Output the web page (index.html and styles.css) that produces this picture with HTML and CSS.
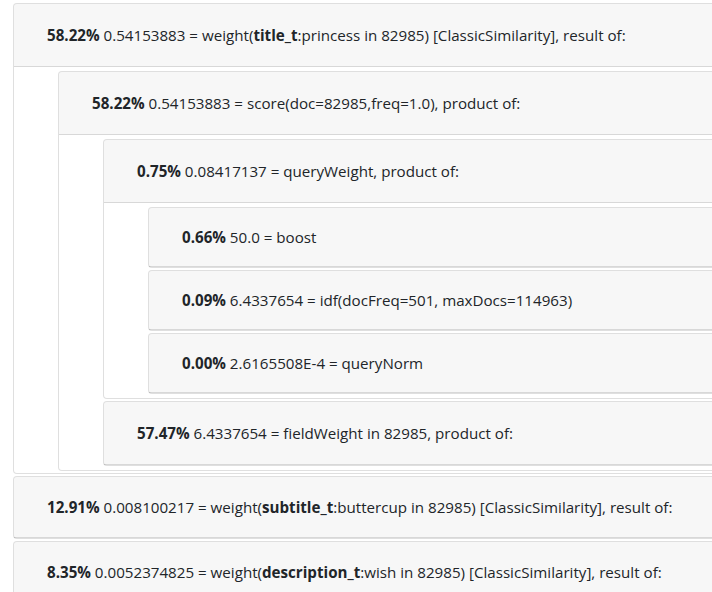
FILE: index.html
```html
<!DOCTYPE html>
<html>
<head>
<meta charset="utf-8">
<link rel="stylesheet" href="styles.css">
</head>
<body>
<div class="tree">
  <div class="card">
    <div class="card-header"><b>58.22%</b> 0.54153883 = weight(<b>title_t</b>:princess in 82985) [ClassicSimilarity], result of:</div>
    <div class="card-body">
      <div class="card">
        <div class="card-header"><b>58.22%</b> 0.54153883 = score(doc=82985,freq=1.0), product of:</div>
        <div class="card-body">
          <div class="card">
            <div class="card-header"><b>0.75%</b> 0.08417137 = queryWeight, product of:</div>
            <div class="card-body">
              <div class="card leaf">
                <div class="card-header"><b>0.66%</b> 50.0 = boost</div>
              </div>
              <div class="card leaf">
                <div class="card-header"><b>0.09%</b> 6.4337654 = idf(docFreq=501, maxDocs=114963)</div>
              </div>
              <div class="card leaf">
                <div class="card-header"><b>0.00%</b> 2.6165508E-4 = queryNorm</div>
              </div>
            </div>
          </div>
          <div class="card leaf tall">
            <div class="card-header"><b>57.47%</b> 6.4337654 = fieldWeight in 82985, product of:</div>
          </div>
        </div>
      </div>
    </div>
  </div>
  <div class="card leaf mid">
    <div class="card-header"><b>12.91%</b> 0.008100217 = weight(<b>subtitle_t</b>:buttercup in 82985) [ClassicSimilarity], result of:</div>
  </div>
  <div class="card leaf mid">
    <div class="card-header"><b>8.35%</b> 0.0052374825 = weight(<b>description_t</b>:wish in 82985) [ClassicSimilarity], result of:</div>
  </div>
</div>
</body>
</html>
```

FILE: styles.css
```css
html, body {
  margin: 0;
  padding: 0;
  overflow: hidden;
  background: #fff;
}
body {
  font-family: "Open Sans", "Noto Sans", sans-serif;
  font-size: 15.15px;
  line-height: 24px;
  color: #212529;
}
.tree {
  padding: 3px 0 0 13px;
  width: 760px;
}
.card {
  background: #fff;
  border: 1px solid rgba(0, 0, 0, 0.125);
  border-radius: 4px;
}
.card + .card {
  margin-top: 2px;
}
.card-header {
  background: rgba(0, 0, 0, 0.03);
  border-bottom: 1px solid rgba(0, 0, 0, 0.125);
  border-radius: 3px 3px 0 0;
  padding: 19px 33px;
  white-space: nowrap;
}
.leaf .card-header {
  padding-top: 17px;
  padding-bottom: 17px;
}
.leaf.tall .card-header {
  padding-top: 19px;
  padding-bottom: 19px;
}
.leaf.mid .card-header {
  padding-top: 18px;
  padding-bottom: 18px;
}
.card-body {
  padding: 4px 0 4px 44px;
}
.tree > .card > .card-body {
  padding-bottom: 2px;
}
b {
  font-weight: 700;
}
```
